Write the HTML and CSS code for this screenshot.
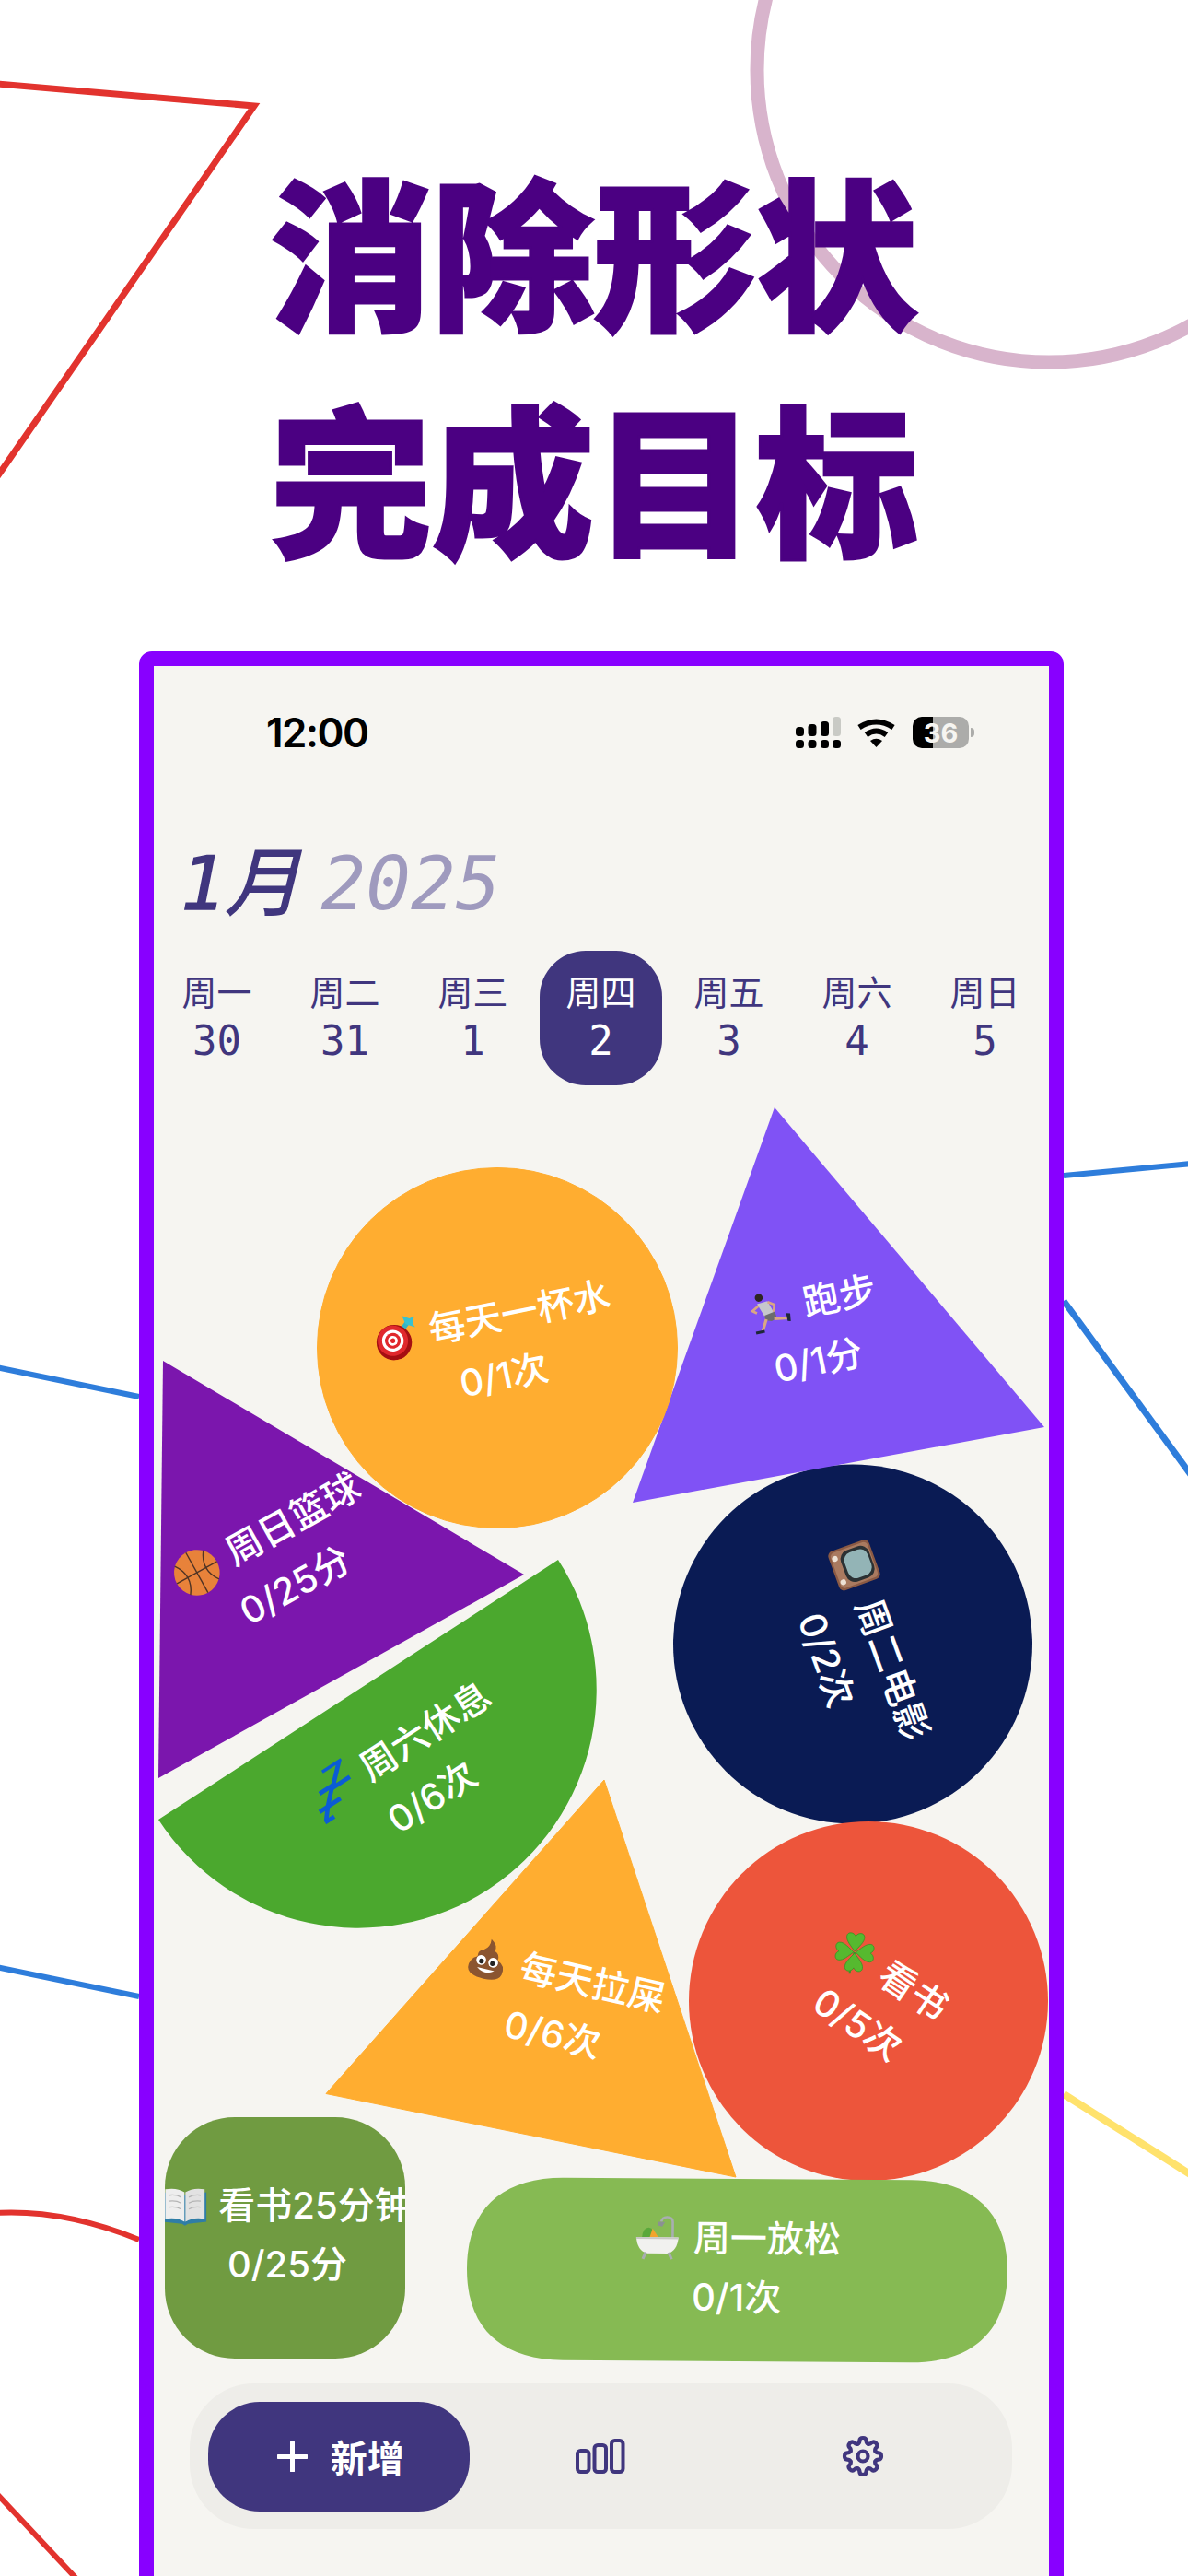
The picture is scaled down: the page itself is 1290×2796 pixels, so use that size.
FILE: index.html
```html
<!DOCTYPE html>
<html lang="zh">
<head>
<meta charset="utf-8">
<title>消除形状 完成目标</title>
<link rel="stylesheet" href="styles.css">
</head>
<body>
<div class="page">
  <svg class="deco" viewBox="0 0 1290 2796" aria-hidden="true">
    <circle class="d-pink" cx="1139" cy="76" r="317"/>
    <path class="d-red" d="M-4 91 L276 115 L-4 519"/>
    <path class="d-blue" d="M-4 1484 L151 1516"/>
    <path class="d-blue" d="M-4 2135 L151 2167"/>
    <path class="d-red thin" d="M-4 2402 Q70 2398 151 2431"/>
    <path class="d-red thin" d="M-4 2706 L84 2800"/>
    <path class="d-blue" d="M1155 1276 L1294 1263"/>
    <path class="d-blue thick" d="M1155 1412 L1294 1602"/>
    <path class="d-yellow" d="M1155 2273 L1294 2361"/>
  </svg>

  <h1 class="title">消除形状<br>完成目标</h1>

  <main class="phone">
    <div class="status">
      <span class="time">12:00</span>
      <div class="status-icons">
        <svg class="ic-signal" viewBox="0 0 49 34">
          <rect class="sig" x="0" y="11" width="9" height="10" rx="3.5"/>
          <rect class="sig" x="13.5" y="8" width="9" height="13" rx="3.5"/>
          <rect class="sig" x="27" y="5" width="9" height="16" rx="3.5"/>
          <rect class="sig-off" x="40" y="0" width="9" height="21" rx="3.5"/>
          <rect class="sig" x="0" y="25" width="9" height="9" rx="3.5"/>
          <rect class="sig" x="13.5" y="25" width="9" height="9" rx="3.5"/>
          <rect class="sig" x="27" y="25" width="9" height="9" rx="3.5"/>
          <rect class="sig" x="40" y="25" width="9" height="9" rx="3.5"/>
        </svg>
        <svg class="ic-wifi" viewBox="0 0 41 31">
          <path class="wf" d="M2 9.5 Q20.5 -2.5 39 9.5"/>
          <path class="wf" d="M9.5 17.5 Q20.5 9.5 31.5 17.5"/>
          <path class="wf-fill" d="M14 24 Q20.5 19.5 27 24 L20.5 31Z"/>
        </svg>
        <div class="battery"><span class="battery-num">36</span></div>
        <span class="battery-cap"></span>
      </div>
    </div>

    <h2 class="date"><b>1月</b> <span>2025</span></h2>

    <div class="week">
      <div class="day"><span>周一</span><em>30</em></div>
      <div class="day"><span>周二</span><em>31</em></div>
      <div class="day"><span>周三</span><em>1</em></div>
      <div class="day active"><span>周四</span><em>2</em></div>
      <div class="day"><span>周五</span><em>3</em></div>
      <div class="day"><span>周六</span><em>4</em></div>
      <div class="day"><span>周日</span><em>5</em></div>
    </div>

    <section class="board">
      <svg class="shapes" viewBox="0 0 972 1390" aria-hidden="true">
        <circle class="s-navy" cx="759" cy="593.5" r="195"/>
        <path class="s-violet" d="M674 11 L967 358 L520 440Z"/>
        <path class="s-purple" d="M10 286 L5 739 L402 518Z"/>
        <circle class="s-orange" cx="373" cy="272" r="195.5"/>
        <path class="s-green" d="M439 502 A250 250 0 0 1 5 784Z"/>
        <circle class="s-red" cx="776" cy="981" r="195"/>
        <path class="s-orange" d="M489 741 L187 1081.5 L632 1172Z"/>
        <path class="s-lime" transform="rotate(0.4 633.5 1273)" d="M340 1273 C340 1208 378 1174 445 1174 L822 1174 C889 1174 927 1208 927 1273 C927 1338 889 1372 822 1372 L445 1372 C378 1372 340 1338 340 1273Z"/>
      </svg>

      <div class="olive">
        <div class="task t-book">
          <div class="line"><svg class="emoji" viewBox="0 0 44 44"><path d="M0 8 L22 11 L44 8 V38 L25 40 L22 42 L19 40 L0 38Z" fill="#2f7da6"/><path d="M2 5 Q14 3 21.5 8 V38 Q14 33 2 35Z" fill="#eeeeee"/><path d="M42 5 Q30 3 22.5 8 V38 Q30 33 42 35Z" fill="#e2e2e2"/><g stroke="#b4b4b4" stroke-width="1.2" fill="none"><path d="M6 11 Q13 10 18 13"/><path d="M6 17 Q13 16 18 19"/><path d="M6 23 Q13 22 18 25"/><path d="M38 11 Q31 10 26 13"/><path d="M38 17 Q31 16 26 19"/><path d="M38 23 Q31 22 26 25"/></g></svg>看书25分钟</div>
          <div class="line">0/25分</div>
        </div>
      </div>

      <div class="task t-water">
        <div class="line"><svg class="emoji" viewBox="0 0 44 44"><path d="M27 17 L38 7" stroke="#35b3c4" stroke-width="5" fill="none"/><path d="M34 10 L32 1 L39 5 L44 4 L41 11 L43 15Z" fill="#39c1cf"/><circle cx="19" cy="26" r="18" fill="#a50f12"/><circle cx="18" cy="24" r="15.5" fill="#e0282c"/><circle cx="18" cy="24" r="11" fill="#fff"/><circle cx="18" cy="24" r="8" fill="#e0282c"/><circle cx="18" cy="24" r="5" fill="#fff"/><circle cx="18" cy="24" r="2.5" fill="#e0282c"/></svg>每天一杯水</div>
        <div class="line">0/1次</div>
      </div>

      <div class="task t-run">
        <div class="line shifted"><svg class="emoji" viewBox="0 0 44 44"><circle cx="13" cy="6" r="4" fill="#2d2523"/><path d="M10 12 L21 11 L25 24 L15 26Z" fill="#c6c8cc"/><path d="M15 25 L26 23 L27 30 L21 32 L15 30Z" fill="#6c6c6c"/><path d="M16 29 L10 40" stroke="#d9a783" stroke-width="3" fill="none"/><path d="M24 30 L38 32" stroke="#d9a783" stroke-width="3" fill="none"/><path d="M11 14 L4 18 L8 21" stroke="#d9a783" stroke-width="2.5" fill="none"/><path d="M21 12 L27 16 L25 23" stroke="#d9a783" stroke-width="2.5" fill="none"/><path d="M3 39 L12 39 L12 42 L3 42Z" fill="#1e2738"/><path d="M37 27 L41 28 L40 36 L37 35Z" fill="#1e2738"/></svg>跑步</div>
        <div class="line">0/1分</div>
      </div>

      <div class="task t-ball">
        <div class="line"><svg class="emoji huge" viewBox="0 0 44 44"><circle cx="22" cy="22" r="21" fill="#e8823a"/><g fill="none" stroke="#4f3325" stroke-width="1.2"><path d="M22 1 V43"/><path d="M1 22 H43"/><path d="M7 7 Q18 22 7 37"/><path d="M37 7 Q26 22 37 37"/></g></svg>周日篮球</div>
        <div class="line">0/25分</div>
      </div>

      <div class="task t-rest">
        <div class="line"><svg class="emoji huge" viewBox="0 0 44 44"><g fill="none" stroke="#0b5cd5" stroke-width="4"><path d="M1 31 H10 L1 42 H10"/><path d="M10 17 H24 L10 31 H24"/><path d="M23 1 H42 L23 19 H42"/></g></svg>周六休息</div>
        <div class="line">0/6次</div>
      </div>

      <div class="task t-movie">
        <div class="line"><svg class="emoji tv" viewBox="0 0 50 50"><g transform="rotate(-90 25 25)"><rect x="4" y="5" width="42" height="40" rx="5" fill="#8b5a44"/><rect x="6" y="7" width="38" height="36" rx="4" fill="#a97a60"/><rect x="14" y="9" width="29" height="32" rx="9" fill="#2b3133"/><rect x="17" y="12" width="24" height="26" rx="8" fill="#93b4b6"/><circle cx="9.5" cy="13" r="2.8" fill="#eee2d6"/><circle cx="9.5" cy="37" r="2.8" fill="#eee2d6"/></g></svg>周二电影</div>
        <div class="line">0/2次</div>
      </div>

      <div class="task t-clover">
        <div class="line"><svg class="emoji" viewBox="0 0 44 44"><defs><path id="leaf" d="M22 21 C18 16 12.5 11 13 6 C13.5 1.5 20 1.5 22 6 C24 1.5 30.5 1.5 31 6 C31.5 11 26 16 22 21Z"/></defs><path d="M22 22 Q24 33 30 43" stroke="#3f9426" stroke-width="2" fill="none"/><g fill="#56b92f" stroke="#3f9426" stroke-width="0.8"><use href="#leaf" transform="rotate(-30 22 22)"/><use href="#leaf" transform="rotate(60 22 22)"/><use href="#leaf" transform="rotate(150 22 22)"/><use href="#leaf" transform="rotate(240 22 22)"/></g></svg>看书</div>
        <div class="line">0/5次</div>
      </div>

      <div class="task t-poop">
        <div class="line"><svg class="emoji" viewBox="0 0 44 44"><path d="M21 1 Q29 6 27 12 Q33 14 32 21 Q41 24 39 34 Q37 42 22 42 Q6 42 4 34 Q3 25 11 21 Q10 15 16 13 Q22 9 21 1Z" fill="#8b5530"/><circle cx="15.5" cy="24" r="5" fill="#fff"/><circle cx="28" cy="24" r="5" fill="#fff"/><circle cx="16" cy="25" r="2.5" fill="#222"/><circle cx="27.5" cy="25" r="2.5" fill="#222"/><path d="M13 32 Q22 39 31 32Z" fill="#fff"/></svg>每天拉屎</div>
        <div class="line">0/6次</div>
      </div>

      <div class="task t-bath">
        <div class="line"><svg class="emoji huge" viewBox="0 0 50 50"><path d="M41 26 V8 Q41 3 35 3 Q30 3 29 8" stroke="#a8aeb0" stroke-width="2.5" fill="none"/><path d="M25 8 L33 8 L30 13 L26 12Z" fill="#8b9193"/><path d="M9 24 Q10 14 16 14 Q22 15 22 24Z" fill="#5aa83b"/><path d="M17 24 L20 15 L26 24Z" fill="#f2a42c"/><path d="M3 24 H47 Q46 38 36 41 H14 Q4 38 3 24Z" fill="#f1f1ef"/><path d="M3 24 H47 V26 H3Z" fill="#c9c9c6"/><path d="M13 40 L10 47 M37 40 L40 47" stroke="#a8aeb0" stroke-width="3" fill="none"/></svg>周一放松</div>
        <div class="line">0/1次</div>
      </div>
    </section>

    <nav class="nav">
      <div class="add">
        <svg class="ic-plus" viewBox="0 0 33 33"><path d="M16.5 1 V32 M1 16.5 H32"/></svg>
        <span>新增</span>
      </div>
      <div class="nav-item">
        <svg class="ic-stats" viewBox="0 0 54 38"><rect x="2" y="13" width="12.5" height="23" rx="3.5"/><rect x="20.5" y="7" width="12.5" height="29" rx="3.5"/><rect x="39" y="2" width="12.5" height="34" rx="3.5"/></svg>
      </div>
      <div class="nav-item">
        <svg class="ic-gear" viewBox="-24 -24 48 48">
          <defs><path id="tooth" d="M-5.5 -13.4 Q-3.5 -14.5 -3.6 -17 Q-3.4 -20 0 -20 Q3.4 -20 3.6 -17 Q3.5 -14.5 5.5 -13.4"/></defs>
          <use href="#tooth"/>
          <use href="#tooth" transform="rotate(45)"/>
          <use href="#tooth" transform="rotate(90)"/>
          <use href="#tooth" transform="rotate(135)"/>
          <use href="#tooth" transform="rotate(180)"/>
          <use href="#tooth" transform="rotate(225)"/>
          <use href="#tooth" transform="rotate(270)"/>
          <use href="#tooth" transform="rotate(315)"/>
          <circle r="5.5"/>
        </svg>
      </div>
    </nav>
  </main>
</div>
</body>
</html>
```
FILE: styles.css
```css
* { box-sizing: border-box; }
html, body { margin: 0; padding: 0; background: #fff; }
body { font-family: "Inter", "Noto Sans CJK SC", sans-serif; }

.page {
  position: relative;
  width: 1290px;
  height: 2796px;
  overflow: hidden;
  background: #fff;
}

/* background line art */
.deco { position: absolute; left: 0; top: 0; width: 1290px; height: 2796px; fill: none; }
.d-pink { stroke: #d8b4cc; stroke-width: 15; }
.d-red { stroke: #e2332e; stroke-width: 7; }
.d-red.thin { stroke-width: 6; }
.d-blue { stroke: #2e7ddb; stroke-width: 6; }
.d-blue.thick { stroke-width: 7; }
.d-yellow { stroke: #ffe26c; stroke-width: 8; }

.title {
  position: relative;
  margin: 0;
  padding-top: 146px;
  text-align: center;
  font-family: "Noto Sans CJK SC", sans-serif;
  font-weight: 900;
  font-size: 176px;
  line-height: 246px;
  color: #4b0082;
  -webkit-text-stroke: 3px #4b0082;
}

.phone {
  position: relative;
  width: 1004px;
  height: 2110px;
  margin: 69px 0 0 151px;
  background: #f6f5f1;
  border: 16px solid #8800ff;
  border-radius: 14px;
}

/* status bar */
.status {
  display: flex;
  align-items: center;
  justify-content: space-between;
  height: 144px;
  padding: 0 81px 0 122px;
}
.time { font-family: "Inter", sans-serif; font-weight: 600; font-size: 44px; letter-spacing: -1.5px; color: #000; }
.status-icons { display: flex; align-items: center; }
.ic-signal { width: 49px; height: 34px; margin-right: 18px; }
.sig { fill: #000; }
.sig-off { fill: #c9cac5; }
.ic-wifi { width: 41px; height: 31px; margin-right: 19px; }
.wf { fill: none; stroke: #000; stroke-width: 6; }
.wf-fill { fill: #000; }
.battery {
  display: flex;
  align-items: center;
  justify-content: center;
  width: 61px;
  height: 34px;
  border-radius: 10px;
  background: linear-gradient(90deg, #000 22px, #acacaa 22px);
}
.battery-num { font-family: "Inter", sans-serif; font-weight: 700; font-size: 29px; color: #f6f5f1; }
.battery-cap {
  width: 4px;
  height: 10px;
  margin-left: 2px;
  border-radius: 0 4px 4px 0;
  background: #acacaa;
}

/* month */
.date {
  margin: 42px 0 0;
  padding-left: 29px;
  height: 100px;
  font-family: "DejaVu Sans Mono", "Noto Sans CJK SC", monospace;
  font-size: 81px;
  line-height: 100px;
  font-style: italic;
  font-weight: 400;
  color: #9f9abe;
  white-space: nowrap;
}
.date b { font-weight: 400; color: #40367e; margin-right: -26px; -webkit-text-stroke: 1.5px #40367e; }

/* week strip */
.week {
  display: grid;
  grid-template-columns: repeat(7, 139px);
  margin: 23px 0 0 -1px;
}
.day {
  display: flex;
  flex-direction: column;
  align-items: center;
  justify-self: center;
  width: 133px;
  height: 146px;
  padding-top: 16px;
  border-radius: 50px;
  color: #40367e;
}
.day span { font-family: "Noto Sans CJK SC", sans-serif; font-size: 38px; line-height: 54px; font-weight: 400; }
.day em { font-family: "DejaVu Sans Mono", monospace; font-style: normal; font-size: 44px; line-height: 56px; }
.day.active { background: #40367e; color: #fff; }

/* habit shapes */
.board { position: relative; height: 1390px; margin-top: 13px; }
.shapes { position: absolute; left: 0; top: 0; width: 972px; height: 1390px; }
.s-navy { fill: #0a1b54; }
.s-violet { fill: #8052f5; }
.s-purple { fill: #7b16ad; }
.s-orange { fill: #ffad30; stroke: #ffad30; stroke-width: 1; stroke-linejoin: round; }
.s-green { fill: #4ba82e; }
.s-red { fill: #ed553b; }
.s-lime { fill: #86ba53; }
.olive {
  position: absolute;
  left: 12px;
  top: 1107px;
  width: 261px;
  height: 262px;
  overflow: hidden;
  border-radius: 76px;
  background: #709b41;
}

.task {
  position: absolute;
  display: flex;
  flex-direction: column;
  align-items: center;
  color: #fff;
  font-size: 40px;
  font-weight: 500;
  line-height: 64px;
  white-space: nowrap;
  transform: translate(-50%, -50%) rotate(var(--r));
}
.line { display: flex; align-items: center; gap: 13px; }
.line.shifted { padding-left: 14px; }
.emoji { width: 47px; height: 47px; flex: none; }
.emoji.huge { width: 52px; height: 52px; }
.emoji.tv { width: 56px; height: 56px; }

.t-water { left: 374px; top: 271px; --r: -11.5deg; }
.t-run { left: 715px; top: 255px; --r: -12deg; }
.t-ball { left: 138px; top: 502px; --r: -29deg; }
.t-rest { left: 285px; top: 733px; --r: -33deg; }
.t-movie { left: 760px; top: 600px; --r: 70deg; }
.t-clover { left: 782px; top: 980px; --r: 34deg; }
.t-poop { left: 440px; top: 986px; --r: 13deg; }
.t-book { left: 133px; top: 128px; --r: 0deg; }
.t-bath { left: 633px; top: 1271px; --r: 0.5deg; }

/* bottom nav */
.nav {
  display: grid;
  grid-template-columns: repeat(3, 1fr);
  align-items: center;
  width: 893px;
  height: 158px;
  margin: 6px 0 0 39px;
  padding: 0 20px;
  border-radius: 70px;
  background: #eeede9;
}
.add {
  display: flex;
  align-items: center;
  justify-content: center;
  gap: 25px;
  height: 119px;
  padding-left: 3px;
  border-radius: 56px;
  background: #40367e;
  color: #fff;
  font-size: 40px;
  font-weight: 700;
}
.nav-item { display: flex; justify-content: center; }
.ic-plus { width: 33px; height: 33px; fill: none; stroke: #fff; stroke-width: 5; stroke-linecap: round; }
.ic-stats { width: 54px; height: 38px; fill: none; stroke: #40367e; stroke-width: 4; }
.ic-gear { width: 48px; height: 48px; fill: none; stroke: #40367e; stroke-width: 4.2; stroke-linecap: round; }
```
